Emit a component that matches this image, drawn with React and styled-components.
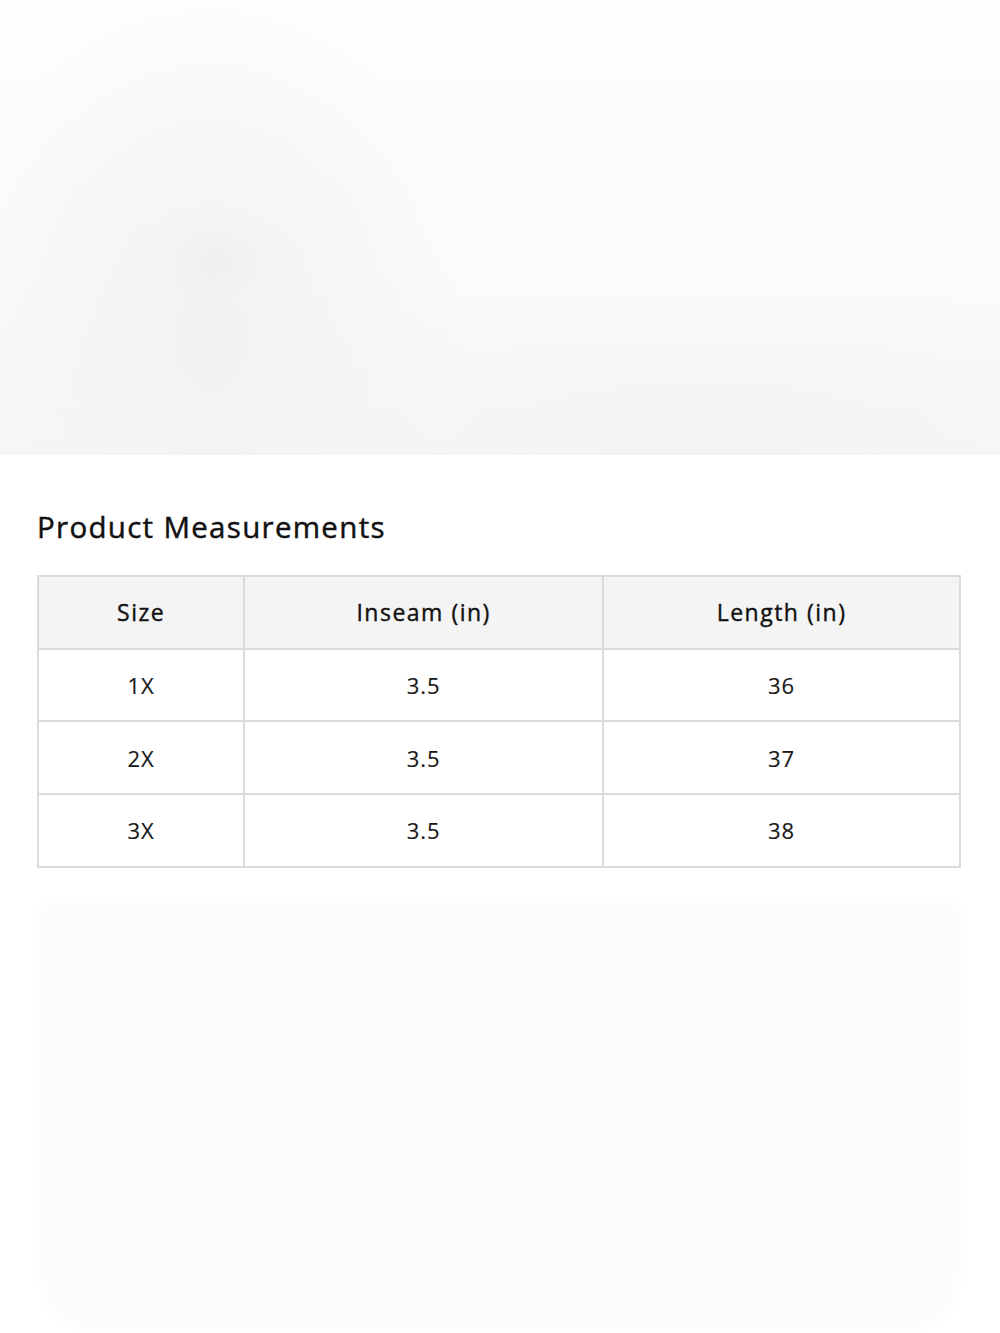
import React from 'react';
import styled, { createGlobalStyle } from 'styled-components';

const GlobalStyle = createGlobalStyle`
  html, body {
    margin: 0;
    padding: 0;
    background: #fff;
  }
  body {
    font-family: "Open Sans", Lato, sans-serif;
    color: #1a1a1a;
  }
`;

const Page = styled.div`
  width: 1000px;
  min-height: 1333px;
  display: flex;
  flex-direction: column;
  background: #fff;
`;

const Hero = styled.div`
  height: 455px;
  background:
    radial-gradient(ellipse 55px 40px at 215px 262px, #efefef 0%, rgba(239,239,239,0) 100%),
    radial-gradient(ellipse 260px 330px at 210px 330px, #f2f2f2 0%, rgba(244,244,244,0.6) 60%, rgba(250,250,250,0) 100%),
    radial-gradient(ellipse 600px 160px at 700px 440px, #f3f3f3 0%, rgba(246,246,246,0.5) 60%, rgba(252,252,252,0) 100%),
    linear-gradient(180deg, #fdfdfd 0%, #fbfbfb 60%, #f6f6f6 100%);
`;

const Section = styled.section`
  padding: 54px 37px 0 37px;
  display: flex;
  flex-direction: column;
`;

const Title = styled.h2`
  margin: 0 0 30px 0;
  font-family: "Open Sans", sans-serif;
  font-size: 29.5px;
  line-height: 36px;
  font-weight: 400;
  letter-spacing: 1.3px;
  color: #111;
  -webkit-text-stroke: 0.45px #111;
`;

const Table = styled.table`
  width: 924px;
  border-collapse: collapse;
  border: 2px solid #dbdbdb;
  font-family: "Open Sans", sans-serif;
`;

const HeadCell = styled.th`
  height: 70.7px;
  padding: 0;
  background: #f4f4f4;
  border: 2px solid #dbdbdb;
  font-size: 23px;
  font-weight: 400;
  letter-spacing: 1.5px;
  color: #111;
  -webkit-text-stroke: 0.4px #111;
  text-align: center;
  width: ${p => p.$w}px;
`;

const Cell = styled.td`
  height: 70.7px;
  padding: 0;
  border: 2px solid #dbdbdb;
  font-size: 22px;
  font-weight: 400;
  letter-spacing: 1px;
  color: #1a1a1a;
  -webkit-text-stroke: 0.15px #1a1a1a;
  text-align: center;
`;

const Ghost = styled.div`
  margin: 35px 40px 0 40px;
  height: 430px;
  background: #fcfcfc;
  border-radius: 4px 4px 60px 60px;
  filter: blur(3px);
`;

const columns = [
  { label: 'Size', w: 206 },
  { label: 'Inseam (in)', w: 360 },
  { label: 'Length (in)', w: 358 },
];

const rows = [
  ['1X', '3.5', '36'],
  ['2X', '3.5', '37'],
  ['3X', '3.5', '38'],
];

export default function App() {
  return (
    <Page>
      <GlobalStyle />
      <Hero />
      <Section>
        <Title>Product Measurements</Title>
        <Table>
          <thead>
            <tr>
              {columns.map(c => (
                <HeadCell key={c.label} $w={c.w}>{c.label}</HeadCell>
              ))}
            </tr>
          </thead>
          <tbody>
            {rows.map(r => (
              <tr key={r[0]}>
                {r.map((v, i) => <Cell key={i}>{v}</Cell>)}
              </tr>
            ))}
          </tbody>
        </Table>
      </Section>
      <Ghost />
    </Page>
  );
}
